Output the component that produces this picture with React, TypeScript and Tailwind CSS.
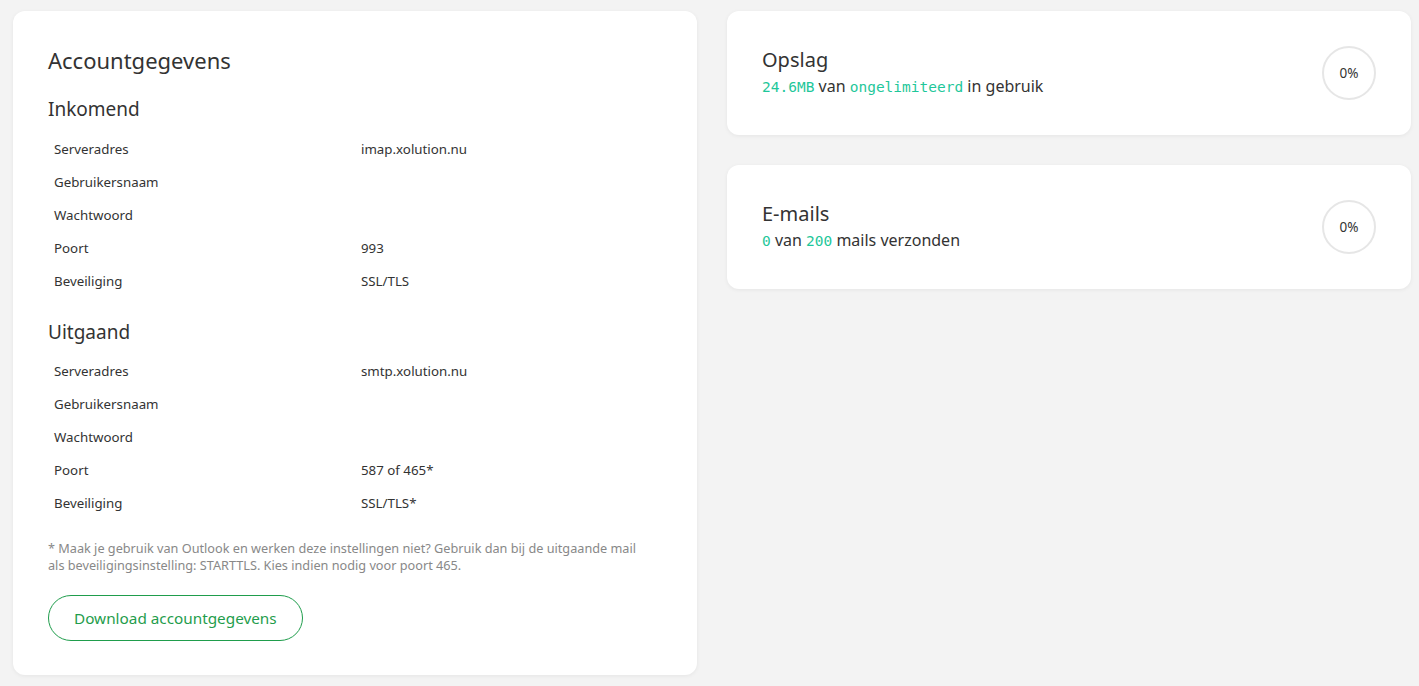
import React from "react";

const font = { fontFamily: '"Noto Sans", "Open Sans", sans-serif' };

type Row = { label: string; value?: string };

const incoming: Row[] = [
  { label: "Serveradres", value: "imap.xolution.nu" },
  { label: "Gebruikersnaam" },
  { label: "Wachtwoord" },
  { label: "Poort", value: "993" },
  { label: "Beveiliging", value: "SSL/TLS" },
];

const outgoing: Row[] = [
  { label: "Serveradres", value: "smtp.xolution.nu" },
  { label: "Gebruikersnaam" },
  { label: "Wachtwoord" },
  { label: "Poort", value: "587 of 465*" },
  { label: "Beveiliging", value: "SSL/TLS*" },
];

function SettingsTable({ rows }: { rows: Row[] }) {
  return (
    <table className="w-full table-fixed border-collapse">
      <tbody>
        {rows.map((r) => (
          <tr key={r.label}>
            <td className="px-1.5 py-1.5 text-[13.3px] leading-[21px] text-[#333]">{r.label}</td>
            <td className="px-1.5 py-1.5 text-[13.3px] leading-[21px] text-[#333]">{r.value ?? ""}</td>
          </tr>
        ))}
      </tbody>
    </table>
  );
}

function Gauge({ pct }: { pct: number }) {
  return (
    <div className="w-[54px] h-[54px] rounded-full border-2 border-[#e6e6e6] flex items-center justify-center shrink-0">
      <span className="text-[13.5px] text-[#333]">{pct}%</span>
    </div>
  );
}

function Mono({ children }: { children: React.ReactNode }) {
  return <span className="font-['DejaVu_Sans_Mono',monospace] text-[14.5px] text-[#1fc79a]">{children}</span>;
}

function StatCard({ title, children }: { title: string; children: React.ReactNode }) {
  return (
    <div className="bg-white rounded-xl shadow-[0_1px_4px_rgba(0,0,0,0.06)] h-[124px] px-[35px] flex items-center justify-between">
      <div>
        <h2 className="text-[20px] leading-[26px] text-[#333]">{title}</h2>
        <p className="text-[16px] leading-[26px] text-[#333]">{children}</p>
      </div>
      <Gauge pct={0} />
    </div>
  );
}

export default function App() {
  return (
    <div className="min-h-[686px] bg-[#f3f3f3] pl-[13px] pr-[8px] py-[11px]" style={font}>
      <div className="grid grid-cols-2 gap-[30px] items-start">
        <div className="bg-white rounded-xl shadow-[0_1px_4px_rgba(0,0,0,0.06)] px-[35px] pt-[34px] pb-[34px]">
          <h1 className="text-[22px] leading-[30px] text-[#333]">Accountgegevens</h1>
          <h2 className="text-[19px] leading-[26px] text-[#333] mt-[21px] mb-[11px]">Inkomend</h2>
          <SettingsTable rows={incoming} />
          <h2 className="text-[19px] leading-[26px] text-[#333] mt-[21px] mb-[10px]">Uitgaand</h2>
          <SettingsTable rows={outgoing} />
          <p className="text-[12.7px] leading-[17px] text-[#888] mt-[20px]">
            * Maak je gebruik van Outlook en werken deze instellingen niet? Gebruik dan bij de uitgaande mail
            <br />
            als beveiligingsinstelling: STARTTLS. Kies indien nodig voor poort 465.
          </p>
          <button className="mt-[21px] h-[46px] px-[25px] rounded-full border border-[#1f9d4c] text-[#1f9d4c] text-[15.3px] bg-white">
            Download accountgegevens
          </button>
        </div>
        <div className="flex flex-col gap-[30px]">
          <StatCard title="Opslag">
            <Mono>24.6MB</Mono> van <Mono>ongelimiteerd</Mono> in gebruik
          </StatCard>
          <StatCard title="E-mails">
            <Mono>0</Mono> van <Mono>200</Mono> mails verzonden
          </StatCard>
        </div>
      </div>
    </div>
  );
}
